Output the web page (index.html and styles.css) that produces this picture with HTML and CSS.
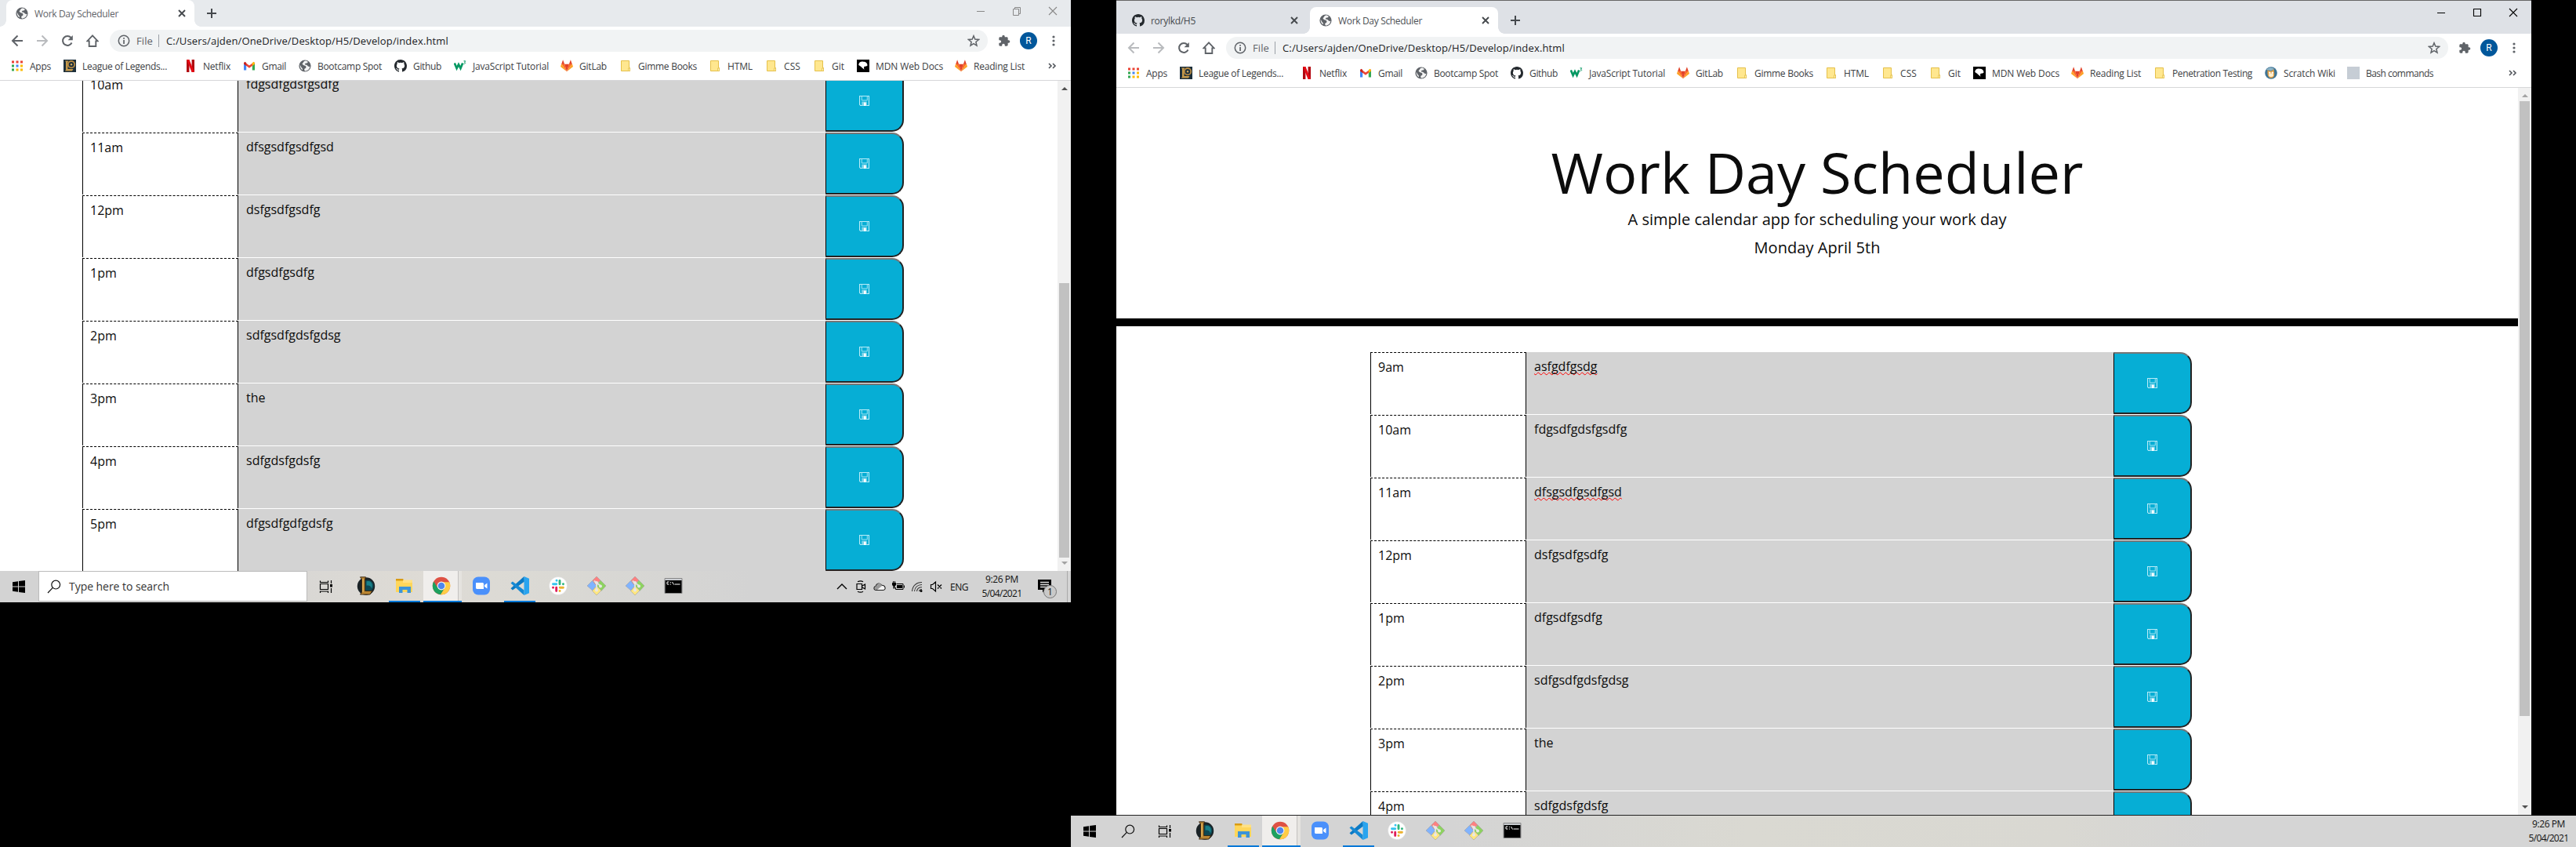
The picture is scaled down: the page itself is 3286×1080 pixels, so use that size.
FILE: index.html
```html
<!DOCTYPE html>
<html lang="en">
<head>
<meta charset="utf-8">
<title>Work Day Scheduler</title>
<link rel="stylesheet" href="styles.css">
</head>
<body>
<svg class="defs" xmlns="http://www.w3.org/2000/svg">
  <symbol id="globe" viewBox="0 0 16 16"><circle cx="8" cy="8" r="7.6" fill="#5f6368"/><path d="M8.6 1.6C6 2 6.2 4 5 4.7S5.800 7 7.200 7.400s2.600 1 2.200 2.600-2.200 1.200-2.200 2.600.4 1.400.8 1.900c3.600 0 6-2.500 6.300-5.800-1.600.6-2.500 0-3.300-1.100S9.200 6.600 8.200 6.400s.3-1.900 1.500-1.900 1.900-.6 2.100-1.500C10.800 2 9.700 1.600 8.600 1.600zM1.700 6.800c-.3 3 1.100 5.300 3.200 6.500.3-1.600-.4-2.300-1.200-3S2.700 8.300 1.700 6.800z" fill="#fff" opacity=".93"/></symbol>
  <symbol id="octo" viewBox="0 0 16 16"><path fill="#24292e" d="M8 0C3.58 0 0 3.58 0 8c0 3.54 2.29 6.53 5.47 7.59.4.07.55-.17.55-.38 0-.19-.01-.82-.01-1.490-2.010.37-2.530-.49-2.690-.94-.09-.23-.48-.94-.82-1.130-.28-.15-.68-.52-.01-.53.63-.01 1.080.58 1.230.82.72 1.210 1.870.87 2.330.66.07-.52.28-.87.51-1.070-1.780-.2-3.640-.89-3.640-3.950 0-.87.31-1.590.82-2.150-.08-.2-.36-1.020.08-2.120 0 0 .67-.21 2.200.82a7.600 7.600 0 0 1 4 0c1.530-1.040 2.200-.82 2.200-.82.44 1.100.16 1.920.08 2.120.51.56.82 1.270.82 2.150 0 3.070-1.870 3.750-3.650 3.950.29.25.54.73.54 1.480 0 1.070-.01 1.930-.01 2.200 0 .21.15.46.55.38A8.010 8.010 0 0 0 16 8c0-4.420-3.580-8-8-8z"/></symbol>
  <symbol id="apps" viewBox="0 0 16 16"><path fill="#ea4335" d="M1 1.500h3v3H1zm5.500 0h3v3h-3zm5.500 0h3v3h-3z"/><path fill="#34a853" d="M1 6.500h3v3H1zm0 5h3v3H1z"/><path fill="#4285f4" d="M6.500 6.500h3v3h-3z"/><path fill="#fbbc05" d="M12 6.500h3v3h-3zm0 5h3v3h-3zm-5.500 0h3v3h-3z"/></symbol>
  <symbol id="lolmark" viewBox="0 0 16 16"><path fill="#1d2f3b" d="M0 0h16v16H0z"/><path fill="#c69a4b" d="M2 1.500h4.500l-1 1.500v9h7l-1.500 2.500H2L3 13V3z"/><circle cx="10" cy="6.200" r="4.200" fill="none" stroke="#b88b42" stroke-width="1.800"/><circle cx="10" cy="6.200" r="1.200" fill="#d2ad63"/></symbol>
  <symbol id="netflix" viewBox="0 0 16 16"><path fill="#b1060f" d="M3 0h3.400v16H3zm6.600 0H13v16H9.600z"/><path fill="#e50914" d="M3 0h3.400L13 16H9.600z"/></symbol>
  <symbol id="gmail" viewBox="0 0 16 16"><path fill="#4285f4" d="M1 4v9.500h3.200V6.200z"/><path fill="#34a853" d="M11.800 6.200v7.300H15V4z"/><path fill="#ea4335" d="M1.800 3 8 7.600 14.200 3 15 5.500 8 10.800 1 5.500z"/><path fill="#c5221f" d="M1 4.400 2.500 2.800l1.700 1.300v3.800L1 5.600z"/><path fill="#fbbc04" d="M15 4.400l-1.500-1.600-1.700 1.300v3.800L15 5.600z"/></symbol>
  <symbol id="wschool" viewBox="0 0 16 16"><path fill="none" stroke="#059862" stroke-width="2.700" d="M.8 4.500 3.600 11 6 6.200 8.500 11 11.200 4.500"/><path fill="none" stroke="#059862" stroke-width="1" d="M12.500 1.800h2.200L13.500 3.500c1.700 0 1.500 2.300-1 1.800"/></symbol>
  <symbol id="gitlab" viewBox="0 0 16 16"><path fill="#fca326" d="M0 9 1.200 5.200 8 15.300 14.800 5.200 16 9 8 15.300z"/><path fill="#fc6d26" d="M1.200 5.200h3.900L8 15.300zm13.600 0h-3.900L8 15.300z"/><path fill="#e24329" d="M5.100 5.800h5.800L8 15.300zM1.200 5.800 3.100.3l2 5.500zm13.600 0L12.900.3l-2 5.500z"/></symbol>
  <symbol id="folder" viewBox="0 0 16 16"><path fill="#ffe78f" stroke="#e5c04a" d="M2.500 1.500h10v9h1v4h-11z"/><path fill="#fff3b8" stroke="#e5c04a" stroke-width=".8" d="M11.500 11h2v3.500h-2z"/></symbol>
  <symbol id="mdn" viewBox="0 0 16 16"><path d="M0 0h16v16H0z"/><path fill="#fff" d="M2.500 5.500C3 3 6 2 8.500 2.800c3 0 5 2 5 4.700l-1.500 1-2.300.2C8.700 9.500 9 11 9.500 12.800L6.300 10 5 8.800 2.300 7z"/></symbol>
  <symbol id="scratch" viewBox="0 0 16 16"><circle cx="8" cy="8" r="7.800" fill="#3e7496"/><path d="M2 4c3-4 8-3 10-1l-4 2z" fill="#91b6c8"/><path d="m3.500 4 2.300 1.500h3L11.500 3l.7 6c.3 4-2 5.500-4.200 5.500S3.700 12 3.500 9z" fill="#e4a044"/><ellipse cx="8" cy="10.700" rx="3" ry="2.200" fill="#fff0d0"/><circle cx="6.300" cy="7.800" r="1.200" fill="#fff"/><circle cx="9.800" cy="7.800" r="1.200" fill="#fff"/></symbol>
  <symbol id="blank" viewBox="0 0 16 16"><path fill="#c6cdd5" d="M0 0h16v16H0z"/></symbol>
  <symbol id="back" viewBox="0 0 16 16"><path fill="none" stroke="currentColor" stroke-width="2" d="M15 8H2m6.500-6.500L2 8l6.500 6.500"/></symbol>
  <symbol id="forward" viewBox="0 0 16 16"><path fill="none" stroke="currentColor" stroke-width="2" d="M1 8h13M7.500 1.500 14 8l-6.500 6.500"/></symbol>
  <symbol id="reload" viewBox="0 0 16 16"><path fill="none" stroke="currentColor" stroke-width="2" d="M13.500 10.500A6 6 0 1 1 12.600 4"/><path fill="currentColor" d="M14.800 1v6.200H8.600z"/></symbol>
  <symbol id="home" viewBox="0 0 16 16"><path fill="none" stroke="currentColor" stroke-width="1.900" d="M8 1.400 1.300 8.400H3.700V15h8.600V8.400h2.400z"/></symbol>
  <symbol id="info" viewBox="0 0 16 16"><circle cx="8" cy="8" r="6.700" fill="none" stroke="#5f6368" stroke-width="1.500"/><path fill="#5f6368" d="M7.200 7h1.700v5H7.200zm0-3h1.700v1.800H7.200z"/></symbol>
  <symbol id="star" viewBox="0 0 16 16"><path fill="none" stroke="#5f6368" stroke-width="1.500" d="m8 1.700 1.800 4.400 4.700.4-3.600 3 1.100 4.600L8 11.700l-4 2.400 1.100-4.600-3.600-3 4.700-.4z"/></symbol>
  <symbol id="puzzle" viewBox="0 0 24 24"><path fill="#5f6368" d="M20.500 11H19V7c0-1.100-.9-2-2-2h-4V3.500a2.500 2.500 0 0 0-5 0V5H4c-1.100 0-2 .9-2 2v3.800h1.500a2.700 2.700 0 0 1 0 5.400H2V20c0 1.100.9 2 2 2h3.800v-1.500a2.700 2.700 0 0 1 5.400 0V22H17c1.100 0 2-.9 2-2v-4h1.500a2.500 2.500 0 0 0 0-5z"/></symbol>
  <symbol id="dots" viewBox="0 0 16 16"><g fill="#5f6368"><circle cx="8" cy="3" r="1.600"/><circle cx="8" cy="8" r="1.600"/><circle cx="8" cy="13" r="1.600"/></g></symbol>
  <symbol id="more" viewBox="0 0 16 16"><path fill="none" stroke="#50545a" stroke-width="1.600" d="m4 5 3 3-3 3m5-6 3 3-3 3"/></symbol>
  <symbol id="close" viewBox="0 0 16 16"><path fill="none" stroke="currentColor" stroke-width="1.900" d="m4 4 8 8m0-8-8 8"/></symbol>
  <symbol id="plus" viewBox="0 0 16 16"><path fill="none" stroke="currentColor" stroke-width="2" d="M8 2v12M2 8h12"/></symbol>
  <symbol id="min" viewBox="0 0 16 16"><path fill="none" stroke="currentColor" d="M3 8.500h10"/></symbol>
  <symbol id="restore" viewBox="0 0 16 16"><path fill="none" stroke="currentColor" d="M3.500 5.500h7v8h-7zM5.500 5V3.500h7v8H11"/></symbol>
  <symbol id="max" viewBox="0 0 16 16"><path fill="none" stroke="currentColor" stroke-width="1.100" d="M3.500 3.500h9v9h-9z"/></symbol>
  <symbol id="exit" viewBox="0 0 16 16"><path fill="none" stroke="currentColor" stroke-width="1.100" d="m3 3 10 10m0-10L3 13"/></symbol>
  <symbol id="floppy" viewBox="0 0 12 12"><path fill="#06aed5" stroke="#b9ecf8" d="M.5.500h11v11H1.500l-1-1z"/><path fill="none" stroke="#a5e6f5" stroke-width=".9" d="M3 .5v5h6.500v-5"/><path fill="#7fd5ea" d="M3 7h6v4.500H3z"/><path fill="#fff" d="M5.500 8H8v4H5.500z"/></symbol>
  <symbol id="windows" viewBox="0 0 16 16"><path d="M0 2.200 7 1.200v6.300H0zm8-1.100L16 0v7.500H8zM0 8.500h7v6.300l-7-1zm8 0h8V16l-8-1.100z"/></symbol>
  <symbol id="search" viewBox="0 0 18 18"><g fill="none" stroke="#111" stroke-width="1.200"><circle cx="11.200" cy="6.600" r="5.400"/><path d="M7.300 10.400 1 17"/></g></symbol>
  <symbol id="taskview" viewBox="0 0 18 18"><path fill="none" stroke="#000" stroke-width="1.200" d="M1.500 5.500h10v7h-10zM1.500 1.500v2h10v-2M1.500 17v-2h10v2M15.500 1v4M15.500 11v6"/><path d="M14 6h3v3.500h-3z"/></symbol>
  <symbol id="lol" viewBox="0 0 24 24"><circle cx="12" cy="12.500" r="11.200" fill="#1a2226"/><circle cx="14" cy="12" r="7.600" fill="#0d4853"/><path fill="#187f88" d="M12.500 6.500c6-2 9 4 6.500 9-1-4-3.500-4-6.500-4z"/><path fill="#b98532" stroke="#33230f" stroke-width=".9" d="M4.500.8h7L10.700 3v15.500h9L17 23H4.500l2-3V3.500z"/><path fill="#e3b65e" d="M7.300 3h1.300v17H7.300z"/></symbol>
  <symbol id="explorer" viewBox="0 0 24 24"><path fill="#d99b12" d="M1 3h9l2 3H1z"/><path fill="#ffd65a" d="M1 5.500h21V20H1z"/><path fill="#ffe083" d="M10 4.500h12V8H10z"/><path fill="#3b94d9" d="M5 13h15v8h-4.500v-4h-6v4H5z"/></symbol>
  <symbol id="chrome" viewBox="0 0 24 24"><circle cx="12" cy="12" r="11.200" fill="#de5144"/><path fill="#1da15f" d="M2.300 6.400A11.200 11.200 0 0 0 11 23.200L16.500 14.500 7 14z"/><path fill="#ffcd46" d="M22.200 7.300A11.200 11.200 0 0 1 11 23.200L16.800 14 12 7.300z"/><circle cx="12" cy="12" r="5.400" fill="#f6f6f6"/><circle cx="12" cy="12" r="4.300" fill="#4f87ee"/></symbol>
  <symbol id="zoomapp" viewBox="0 0 24 24"><rect x="1" y=".5" width="22" height="23" rx="7" fill="#4a90fb"/><path fill="#fff" d="M5 8h8c1.500 0 2 .5 2 2v6H7c-1.500 0-2-.5-2-2zm11 3 3.500-2.500v7L16 13z"/></symbol>
  <symbol id="vscode" viewBox="0 0 24 24"><path fill="#0a79c4" d="M17.500 0 .5 15.300l2.400 2.200L18 6.500z"/><path fill="#1689d4" d="M2.900 6.500.5 8.500 17.500 24V17.500z"/><path fill="#29a4ef" d="M17.500 0 24 2.700v18.600L17.500 24z"/></symbol>
  <symbol id="slack" viewBox="0 0 24 24"><circle cx="12" cy="12" r="11.500" fill="#fff" stroke="#d5d5d5" stroke-width=".5"/><g stroke-width="2.900" stroke-linecap="round"><path stroke="#36c5f0" d="M5.500 9.700h4.200M10 5.200h.1"/><path stroke="#2eb67d" d="M14 5.500v4.200M18.400 9.700h.1"/><path stroke="#ecb22e" d="M14.200 14.200h4.200M14 18.500h.1"/><path stroke="#e01e5a" d="M9.700 14.200v4.300M5.500 14.200h.1"/></g></symbol>
  <symbol id="git" viewBox="0 0 24 24"><g stroke="#999" stroke-width=".5"><path fill="#ff8080" d="m12 0 5 5-7 6-3-6z"/><path fill="#80b3ff" d="M6.500 5.500 12 12l-5 6-7-6z"/><path fill="#8dd35f" d="m17 5 7 7-6 6.500-6-6.500z"/><path fill="#ffe680" d="m12 12 6 6-6 6-5.500-5.500z"/></g><path fill="none" stroke="#e0e0dc" stroke-width="2" d="M9 5.500 12 9v9m0-10 5 4"/><g fill="#e8e8e4"><circle cx="12" cy="17.500" r="2"/><circle cx="17" cy="12.500" r="2"/><circle cx="12" cy="8" r="2"/></g></symbol>
  <symbol id="cmd" viewBox="0 0 24 24"><path fill="#c9ccd0" stroke="#888" d="M1 2.500h22v19H1z"/><path fill="#000" d="M1.500 5h21v16h-21z"/><path fill="none" stroke="#fff" stroke-width="1" d="M6.500 7H4v3h2.500M8.500 7v1m0 1.500v1M10.500 7l2 3.500M13.500 10h7"/></symbol>
  <symbol id="caret" viewBox="0 0 16 16"><path fill="none" stroke="#000" stroke-width="1.400" d="M2 11 8 5l6 6"/></symbol>
  <symbol id="meet" viewBox="0 0 16 16"><path fill="none" stroke="#000" stroke-width="1.200" d="M3 4.500h6.500v7H3zM10 7l3.500-2v6L10 9M4 1.800q4-2 7 0M4 14.200q4 2 7 0"/></symbol>
  <symbol id="cloud" viewBox="0 0 16 16"><path fill="#f3f3f3" stroke="#222" stroke-width="1.100" d="M3.500 12.500C0 12 .2 8 3.300 7.500 4 3.500 9 2.800 10.600 6.200c5-.2 6.200 5.800 2 6.300z"/><path fill="#999" d="M2 8.500 4 7l2-3h3l2 3-6 5H2z"/></symbol>
  <symbol id="battery" viewBox="0 0 16 16"><path fill="none" stroke="#000" d="M5.500 4.500h8.500v7H4.500v-2.500M15.500 6.500v3"/><path d="M6 6h7v4H6zM0 3h5v3L3.500 7.500v3h-2v-3L0 6z"/><path stroke="#000" d="M1.500 1v2m2-2v2"/></symbol>
  <symbol id="wifi" viewBox="0 0 16 16"><g fill="none" stroke="#333" stroke-width="1.100"><path d="M1.500 14C2 7 7 2.500 14 2.500M4.500 14c.5-5 4-8.500 9.500-8.500M7.500 14c.3-3 2.500-5.300 6.500-5.300M10.500 14c.2-1.500 1.500-2.500 3.500-2.500"/></g><circle cx="13" cy="13.500" r="1.500"/></symbol>
  <symbol id="mute" viewBox="0 0 16 16"><path fill="none" stroke="#000" stroke-width="1.200" d="M1.500 5.500h2L7.500 2v12l-4-3.500h-2zM10 5.500l5 5m0-5-5 5"/></symbol>
  <symbol id="note" viewBox="0 0 18 18"><path d="M0 0h17v13H9l-3 3.500V13H0z"/><path stroke="#ddd" stroke-width="1.300" d="M3 3.500h11M3 6.500h11M3 9.500h8"/></symbol>
</svg>

<main class="desktop">
  <section class="screen screen-left">
    <div class="browser inactive">
      <header class="tabs">
        <div class="tab active"><svg class="i16"><use href="#globe"/></svg><span class="title" data-w="107">Work Day Scheduler</span><svg class="i16 x"><use href="#close"/></svg></div>
        <svg class="i16 plus"><use href="#plus"/></svg>
        <div class="controls"><svg class="i16"><use href="#min"/></svg><svg class="i16"><use href="#restore"/></svg><svg class="i16"><use href="#exit"/></svg></div>
      </header>
      <div class="chrome" data-bookmarks="14"></div>
      <div class="viewport">
        <div class="page"><div class="schedule" data-from="1" data-to="9"></div></div>
        <div class="scrollbar"><i class="up"></i><div class="track track-low"><div class="thumb"></div></div><i class="down dim"></i></div>
      </div>
    </div>
    <footer class="taskbar">
      <div class="start"><svg class="i16"><use href="#windows"/></svg></div>
      <div class="searchbox"><svg class="i18"><use href="#search"/></svg><span data-w="128">Type here to search</span></div>
      <div class="view"><svg class="i18"><use href="#taskview"/></svg></div>
      <div class="apps"></div>
      <div class="tray">
        <svg class="i16"><use href="#caret"/></svg><svg class="i16"><use href="#meet"/></svg><svg class="i16"><use href="#cloud"/></svg><svg class="i16"><use href="#battery"/></svg><svg class="i16"><use href="#wifi"/></svg><svg class="i16"><use href="#mute"/></svg>
        <span class="lang" data-w="23">ENG</span>
      </div>
      <div class="clock"><span data-w="42">9:26 PM</span><span data-w="51">5/04/2021</span></div>
      <div class="notify"><svg class="i18"><use href="#note"/></svg><b>1</b></div>
    </footer>
  </section>

  <section class="screen screen-right">
    <div class="browser">
      <header class="tabs">
        <div class="tab"><svg class="i16"><use href="#octo"/></svg><span class="title" data-w="57">rorylkd/H5</span><svg class="i16 x"><use href="#close"/></svg></div>
        <div class="tab active"><svg class="i16"><use href="#globe"/></svg><span class="title" data-w="107">Work Day Scheduler</span><svg class="i16 x"><use href="#close"/></svg></div>
        <svg class="i16 plus"><use href="#plus"/></svg>
        <div class="controls"><svg class="i16"><use href="#min"/></svg><svg class="i16"><use href="#max"/></svg><svg class="i16"><use href="#exit"/></svg></div>
      </header>
      <div class="chrome" data-bookmarks="17"></div>
      <div class="viewport">
        <div class="page">
          <div class="jumbotron">
            <h1 data-w="679">Work Day Scheduler</h1>
            <p data-w="483">A simple calendar app for scheduling your work day</p>
            <p data-w="161">Monday April 5th</p>
          </div>
          <div class="schedule" data-from="0" data-to="8" data-spell="0,2"></div>
        </div>
        <div class="scrollbar"><i class="up dim"></i><div class="track"><div class="thumb"></div></div><i class="down"></i></div>
      </div>
    </div>
    <footer class="taskbar">
      <div class="start"><svg class="i16"><use href="#windows"/></svg></div>
      <div class="find"><svg class="i18"><use href="#search"/></svg></div>
      <div class="view"><svg class="i18"><use href="#taskview"/></svg></div>
      <div class="apps"></div>
      <div class="clock"><span data-w="42">9:26 PM</span><span data-w="51">5/04/2021</span></div>
    </footer>
  </section>
</main>
<script src="app.js"></script>
</body>
</html>
```
FILE: styles.css
```css
* { box-sizing: border-box; }
body { margin: 0; background: #000; font-family: "Open Sans", "Noto Sans", sans-serif; font-size: 12px; color: #3c4043; overflow: hidden; }
svg { display: block; flex: none; }
.defs { display: none; }
.i16 { width: 16px; height: 16px; }
.i18 { width: 18px; height: 18px; }
.desktop { display: flex; align-items: flex-start; width: 3286px; height: 1080px; }
.screen { display: flex; flex-direction: column; flex: none; }
.screen-left { width: 1366px; height: 768px; }
.screen-right { width: 1920px; height: 1080px; }
.browser { flex: 1; min-height: 0; display: flex; flex-direction: column; background: #fff; }
.screen-right .browser { width: 1805px; margin-left: 58px; border-top: 1px solid #666; border-bottom: 1px solid #222; }
[data-w] { white-space: nowrap; }

/* tab strip */
.tabs { display: flex; align-items: flex-end; height: 43px; flex: none; background: #dee1e6; padding-top: 8px; margin-top: -1px; border-top: 1px solid #666; }
.tab { display: flex; align-items: center; width: 239px; height: 34px; padding: 0 8px 0 12px; color: #45494d; }
.screen-right .tab:first-child { width: 247px; padding: 0 12px 0 20px; }
.tab.active { width: 240px; background: #fff; border-radius: 8px 8px 0 0; position: relative; color: #4c5054; }
.tab.active::before, .tab.active::after { content: ""; position: absolute; bottom: 0; width: 8px; height: 8px; }
.tab.active::before { left: -8px; background: radial-gradient(circle at 0 0, transparent 7.5px, #fff 8px); }
.tab.active::after { right: -8px; background: radial-gradient(circle at 100% 0, transparent 7.5px, #fff 8px); }
.title { margin-left: 8px; }
.x { margin-left: auto; color: #45494d; }
.plus { margin: 0 0 9px 14px; color: #45494d; }
.controls { display: flex; gap: 30px; margin: 0 15px 19px auto; color: #000; }
.inactive .tabs { height: 34px; background: #e7eaed; padding: 0 0 0 8px; margin: 0; border: 0; }
.inactive .tab.active { color: #5f6368; }
.inactive .controls { margin-bottom: 12px; color: #888; }

/* address bar and bookmarks */
.chrome { flex: none; height: 69px; border-bottom: 1px solid #d6d7d9; }
.toolbar { display: flex; align-items: center; height: 36px; padding: 0 14px; color: #5f6368; }
.toolbar .nav { margin-right: 16px; }
.nav.dim { color: #b9bbbe; }
.inactive .nav:first-child { color: #5f6368; }
.address { flex: 1; height: 28px; border-radius: 14px; background: #f1f3f4; display: flex; align-items: center; padding: 0 10px; margin-left: -2px; margin-right: 13px; font-size: 13px; }
.scheme { margin-left: 8px; color: #5f6368; }
.divider { width: 1px; height: 16px; background: #9aa0a6; margin: 0 9px 0 7px; }
.url { color: #202124; }
.address .star { margin-left: auto; }
.avatar { width: 22px; height: 22px; border-radius: 50%; background: #01579b; color: #fff; font: 12px/22px Roboto, sans-serif; text-align: center; margin: 0 13px 0 12px; }
.bookmarks { display: flex; align-items: center; height: 28px; padding-left: 14px; }
.bookmark { display: flex; align-items: center; flex: none; }
.bookmark span { margin-left: 8px; }
.overflow { margin: 0 16px 0 auto; }

/* page */
.viewport { flex: 1; min-height: 0; display: flex; overflow: hidden; }
.page { flex: 1; color: #0c0c0c; overflow: hidden; }
.schedule { width: 1048px; font-size: 16px; line-height: 24px; }
.screen-left .schedule { margin: -14px 0 0 105px; }
.screen-right .schedule { margin-left: 324px; }
.row { display: flex; height: 79px; margin-bottom: 1px; }
.hour { width: 199px; border: 1px solid #000; border-top: 1px dashed #000; border-bottom: 0; padding: 6px 9px; }
.task { flex: 1; background: #d3d3d3; padding: 6px 10px; }
.spell { text-decoration: underline wavy #f00 1px; text-underline-offset: 1px; text-decoration-skip-ink: none; }
.save { width: 100px; background: #06aed5; border: 2px solid #222; border-top-color: #767676; border-left: 1px solid #000; border-radius: 0 15px 15px 0; display: flex; align-items: center; justify-content: center; padding: 0; }
.save svg { width: 13px; height: 13px; }
.jumbotron { height: 304px; border-bottom: 10px solid #000; margin-bottom: 33px; text-align: center; padding-top: 64px; }
h1 { margin: 0; font-size: 72px; line-height: 86px; font-weight: 400; }
.jumbotron p { margin: 0; font-size: 20px; line-height: 30px; padding-bottom: 6px; }
.jumbotron h1 + p { margin-top: 3px; }

.scrollbar { width: 17px; flex: none; background: #f1f1f1; display: flex; flex-direction: column; align-items: center; }
.scrollbar i { border: 4.500px solid transparent; }
.scrollbar .up { border-bottom-color: #505050; border-top: 0; margin: 8px 0 5px; }
.scrollbar .down { border-top-color: #505050; border-bottom: 0; margin: 5px 0 8px; }
.scrollbar .up.dim { border-bottom-color: #a3a3a3; }
.scrollbar .down.dim { border-top-color: #a3a3a3; }
.track { flex: 1; width: 13px; }
.thumb { background: #c1c1c1; height: 784px; }
.track-low { display: flex; align-items: flex-end; }
.track-low .thumb { width: 13px; height: 350px; }

/* taskbar */
.taskbar { height: 40px; flex: none; display: flex; align-items: center; background: linear-gradient(90deg, #d3d3d3 0 15%, #dedbd5 40%, #dad9d4 52%, #d3d3d3 70%); color: #111; }
.screen-right .taskbar { background: linear-gradient(90deg, #d4d4d4 0 25%, #dad9d2 45%, #d9d8d2 66%, #d5d5d5 76%); }
.start { padding: 0 17px 0 16px; }
.searchbox { width: 343px; height: 39px; align-self: flex-end; background: #fff; border: 1px solid #bbb; display: flex; align-items: center; padding-left: 10px; margin-bottom: 1px; font-size: 14px; color: #333; }
.searchbox span { margin-left: 10px; }
.view { padding: 0 17px 0 15px; }
.find { padding: 0 14px 0 15px; }
.apps { display: flex; height: 40px; }
.app { width: 49.100px; display: flex; justify-content: center; align-items: center; border-bottom: 2px solid transparent; }
.app svg { width: 24px; height: 24px; }
.app.open { background: linear-gradient(#0078d7, #0078d7) 50% 100% / 40px 2px no-repeat; background-origin: border-box; }
.app.current { background: linear-gradient(90deg, #f0eeec 0 44px, #c4c2c0 44px 45px, #e5e3df 45px); border-bottom-color: #0078d7; padding-right: 3px; }
.tray { display: flex; align-items: center; gap: 8px; margin-left: auto; }
.lang { font-size: 12px; margin-left: 2px; }
.clock { display: flex; flex-direction: column; align-items: center; line-height: 18px; width: 54px; margin-left: 16px; color: #111; }
.screen-right .clock { margin-left: auto; margin-right: 8px; }
.notify { position: relative; width: 40px; height: 40px; margin: 0 4px 0 17px; padding: 11px 0 0 2px; border-right: 1px solid #aaa; }
.notify b { position: absolute; left: 9px; top: 18px; width: 17px; height: 17px; border: 1px solid #777; border-radius: 50%; background: #c9c9c9; font: 12px/15px "Open Sans", sans-serif; text-align: center; }
```
FILE: app.js
```js
// Bookmark bar: icon, label, label width, distance to the next bookmark
const bookmarks = [
  ["apps", "Apps", 27, 67], ["lolmark", "League of Legends...", 108, 154], ["netflix", "Netflix", 35, 75],
  ["gmail", "Gmail", 31, 71], ["globe", "Bootcamp Spot", 82, 122], ["octo", "Github", 36, 76],
  ["wschool", "JavaScript Tutorial", 97, 136], ["gitlab", "GitLab", 35, 75], ["folder", "Gimme Books", 75, 114],
  ["folder", "HTML", 32, 72], ["folder", "CSS", 21, 61], ["folder", "Git", 16, 56],
  ["mdn", "MDN Web Docs", 86, 125], ["gitlab", "Reading List", 65, 105], ["folder", "Penetration Testing", 102, 142],
  ["scratch", "Scratch Wiki", 66, 105], ["blank", "Bash commands", 86, 120]
];
const slots = [
  ["9am", "asfgdfgsdg"], ["10am", "fdgsdfgdsfgsdfg"], ["11am", "dfsgsdfgsdfgsd"], ["12pm", "dsfgsdfgsdfg"],
  ["1pm", "dfgsdfgsdfg"], ["2pm", "sdfgsdfgdsfgdsg"], ["3pm", "the"], ["4pm", "sdfgdsfgdsfg"], ["5pm", "dfgsdfgdfgdsfg"]
];
const apps = ["lol", "explorer open", "chrome current", "zoomapp", "vscode open", "slack", "git", "git", "cmd"];
const icon = (name, cls = "i16") => `<svg class="${cls}"><use href="#${name}"/></svg>`;

document.querySelectorAll(".chrome").forEach(el => {
  el.innerHTML = `<div class="toolbar">${icon("back", "i16 nav dim")}${icon("forward", "i16 nav dim")}${icon("reload", "i16 nav")}${icon("home", "i16 nav")}
    <div class="address">${icon("info")}<span class="scheme" data-w="21">File</span><span class="divider"></span><span class="url" data-w="360">C:/Users/ajden/OneDrive/Desktop/H5/Develop/index.html</span>${icon("star", "i16 star")}</div>
    ${icon("puzzle")}<span class="avatar">R</span>${icon("dots", "i16")}</div>
    <div class="bookmarks">${bookmarks.slice(0, +el.dataset.bookmarks).map(([i, label, w, step]) =>
      `<div class="bookmark" style="width:${step}px">${icon(i)}<span data-w="${w}">${label}</span></div>`).join("")}${icon("more", "i16 overflow")}</div>`;
});
document.querySelectorAll(".schedule").forEach(el => {
  const spell = (el.dataset.spell || "").split(",");
  el.innerHTML = slots.slice(+el.dataset.from, +el.dataset.to).map(([hour, text], n) =>
    `<div class="row"><div class="hour">${hour}</div><div class="task"><span class="${spell.includes(String(n)) ? "spell" : ""}">${text}</span></div><button class="save">${icon("floppy")}</button></div>`).join("");
});
document.querySelectorAll(".apps").forEach(el => {
  el.innerHTML = apps.map(a => { const [i, state = ""] = a.split(" "); return `<div class="app ${state}">${icon(i)}</div>`; }).join("");
});

// Track each label so that it fills its intended width
document.querySelectorAll("[data-w]").forEach(el => {
  const range = document.createRange();
  range.selectNodeContents(el);
  const natural = range.getBoundingClientRect().width;
  el.style.letterSpacing = (el.dataset.w - natural) / el.textContent.length + "px";
});
```
